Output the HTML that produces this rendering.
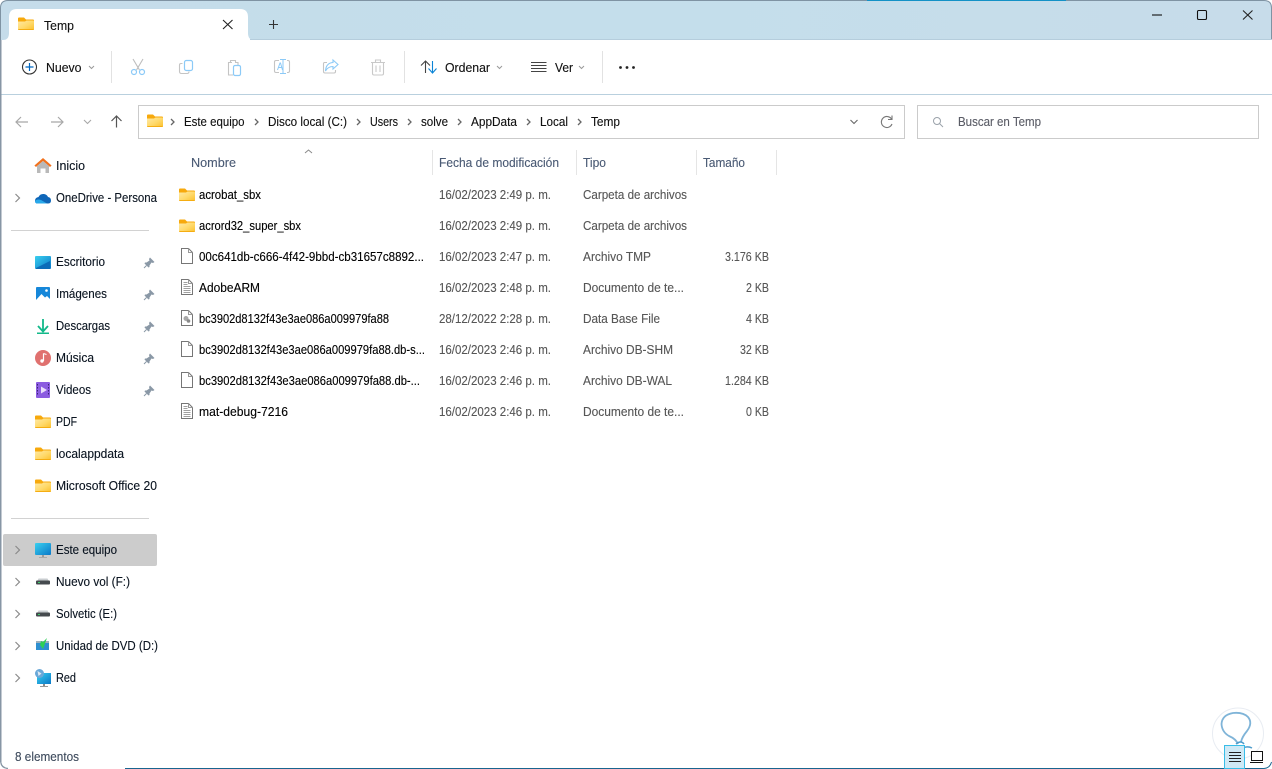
<!DOCTYPE html>
<html lang="es"><head><meta charset="utf-8"><title>Temp</title>
<style>
html,body{margin:0;padding:0;width:1272px;height:769px;overflow:hidden;background:#fff}
svg{display:block}
text{font-family:"Liberation Sans",sans-serif;font-size:12.5px;fill:#111;stroke:#111;stroke-width:.12px;white-space:pre}
.n{fill:#000;stroke:#000}
.h{fill:#4a5a74;stroke:#4a5a74}
.d{fill:#565656;stroke:#565656}
.s{fill:#0a1420;stroke:#0a1420}
.e{fill:#3d4a5c;stroke:#3d4a5c}
.q{fill:#5a5c66;stroke:#5a5c66}
</style></head><body>
<svg width="1272" height="769" viewBox="0 0 1272 769" xmlns="http://www.w3.org/2000/svg">
<defs>
<linearGradient id="fg" x1="0" y1="0" x2="1" y2="1"><stop offset="0" stop-color="#ffe9a6"/><stop offset=".55" stop-color="#ffd969"/><stop offset="1" stop-color="#fbc02d"/></linearGradient>
<linearGradient id="tb" x1="0" y1="0" x2="1" y2="0"><stop offset="0" stop-color="#c5dcea"/><stop offset=".5" stop-color="#c4deeb"/><stop offset="1" stop-color="#c7dcea"/></linearGradient>
<linearGradient id="mon" x1="0" y1="0" x2="1" y2="1"><stop offset="0" stop-color="#3ad0ef"/><stop offset="1" stop-color="#0a78c8"/></linearGradient>
<g id="folder"><path d="M0 1.500Q0 .5 1 .5H6L8 2.500H15Q16 2.500 16 3.500V5H0Z" fill="#f7a90c"/><path d="M0 4.500L7 4.500L8.500 3.500H15Q16 3.500 16 4.500V12Q16 13 15 13H1Q0 13 0 12Z" fill="url(#fg)"/><path d="M0 12H16V12Q16 13 15 13H1Q0 13 0 12Z" fill="#f5ad12"/></g>
<g id="doc"><path d="M1.500 .5H8.500L12.500 4.500V15.500H1.500Z" fill="#fff" stroke="#767676"/><path d="M8.500 .5V4.500H12.500" fill="none" stroke="#999"/></g>
<g id="txt"><use href="#doc"/><path d="M3.500 3.500H7.500M3.500 5.500H7.500M3.500 7.500H10.500M3.500 9.500H10.500M3.500 11.500H10.500M3.500 13.500H10.500" stroke="#a0a0a0" fill="none"/></g>
<g id="chev"><path d="M0 0L4 4L0 8" fill="none" stroke="#8a8a8a" stroke-width="1.200"/></g>
<g id="bc"><path d="M0 0L3 3L0 6" fill="none" stroke="#666" stroke-width="1.300"/></g>
<g id="pin"><path d="M6 .5L10.500 5L9 6L7.500 5.500L5.500 8.500L5.500 10L4.500 10.500L.5 6.500L1 5.500L2.500 5.500L5.500 3.500L5 2Z" fill="#8a98a6"/><path d="M2.500 8.500L0 11" stroke="#8a98a6" fill="none"/></g>
<g id="dr"><rect x="0" y="2.500" width="14" height="4" rx="1" fill="#454a4e"/><path d="M1.500 2.500L2.500 .5H11.500L12.500 2.500Z" fill="#c9cdd0"/><rect x="2" y="4" width="2" height="1" fill="#3fd06a"/></g>
</defs>

<!-- window -->
<rect x="0" y="0" width="1272" height="769" fill="#fff"/>
<path d="M0 40V8Q0 0 8 0H1264Q1272 0 1272 8V40Z" fill="url(#tb)"/>
<path d="M.5 40V8Q.5 .5 8 .5H1264Q1271.500 .5 1271.500 8V40" fill="none" stroke="#7f93a3"/>
<rect x="0" y="40" width="1.500" height="722" fill="#8796a5"/>
<path d="M.7 762Q1.500 768 8 768.500" fill="none" stroke="#8796a5" stroke-width="1.300"/>
<rect x="867" y="0" width="199" height="1" fill="#1391c6"/>
<path d="M125 768.500H1264Q1270 768 1271.500 762" fill="none" stroke="#19658f"/>

<!-- tab -->
<path d="M3 40Q9 40 9 33V17Q9 9 17 9H240Q248 9 248 17V33Q248 40 254 40Z" fill="#fff"/>
<rect x="1.500" y="40" width="1270.500" height="54" fill="#fff"/>
<path d="M250 39.500H1272" stroke="#b5cddc"/>
<use href="#folder" x="18" y="17"/>
<text x="44" y="30" textLength="30" lengthAdjust="spacingAndGlyphs">Temp</text>
<path d="M223 20L232.500 29M232.500 20L223 29" stroke="#222" stroke-width="1.100" fill="none"/>
<path d="M273.500 20V29M269 24.500H278" stroke="#333" stroke-width="1.100" fill="none"/>
<path d="M1152 15H1162" stroke="#111" fill="none" stroke-width="1.100"/>
<rect x="1197.500" y="10.500" width="9" height="9" rx="1.200" fill="none" stroke="#111" stroke-width="1.100"/>
<path d="M1243 10.500L1252.500 19.500M1252.500 10.500L1243 19.500" stroke="#222" stroke-width="1.100" fill="none"/>

<!-- toolbar -->
<circle cx="29.500" cy="67" r="7" fill="none" stroke="#333" stroke-width="1.100"/>
<path d="M29.500 63V71M25.500 67H33.500" stroke="#0067c0" stroke-width="1.200" fill="none"/>
<text x="46" y="72" textLength="35.500" lengthAdjust="spacingAndGlyphs">Nuevo</text>
<path d="M89 66L91.500 68.500L94 66" fill="none" stroke="#9a9a9a"/>
<rect x="111" y="51" width="1" height="32" fill="#e2e2e2"/>
<rect x="404" y="51" width="1" height="32" fill="#e2e2e2"/>
<rect x="602" y="51" width="1" height="32" fill="#e2e2e2"/>
<!-- cut -->
<path d="M133 59L139.500 70M143 59L136.500 70" stroke="#bdbdbd" stroke-width="1.100" fill="none"/>
<circle cx="134" cy="72" r="2.500" fill="none" stroke="#8ccaf7" stroke-width="1.200"/>
<circle cx="142" cy="72" r="2.500" fill="none" stroke="#8ccaf7" stroke-width="1.200"/>
<!-- copy -->
<path d="M182.500 63.500H181Q179.500 63.500 179.500 65V71.500Q179.500 73.500 181.500 73.500H187Q189 73.500 189 71.500" fill="none" stroke="#c4c4c4" stroke-width="1.100"/>
<rect x="184.500" y="60.500" width="8" height="10" rx="1.800" fill="#fff" stroke="#8ccaf7" stroke-width="1.200"/>
<!-- paste -->
<path d="M232 62.500H228.500V75H233M238 65V62.500H235M230.500 62V60.500H235.500V62.500" fill="none" stroke="#c4c4c4" stroke-width="1.100"/>
<rect x="233.500" y="65.500" width="7" height="10" rx="1.500" fill="#fff" stroke="#8ccaf7" stroke-width="1.200"/>
<!-- rename -->
<path d="M279 60.500H276Q274.500 60.500 274.500 62V71Q274.500 72.500 276 72.500H279M287 60.500H288Q289.500 60.500 289.500 62V71Q289.500 72.500 288 72.500H287" fill="none" stroke="#c4c4c4" stroke-width="1.100"/>
<path d="M280 59.500H286M280 73.500H286M283 59.500V73.500" fill="none" stroke="#8ccaf7" stroke-width="1"/>
<path d="M277.500 70L280 63H280.500L282.500 70M278.500 67.500H281.500" fill="none" stroke="#8ccaf7" stroke-width="1"/>
<!-- share -->
<path d="M327 62.500H324.500Q323.500 62.500 323.500 64V71.500Q323.500 73 325 73H334Q335.500 73 335.500 71.500V70" fill="none" stroke="#c4c4c4" stroke-width="1.100"/>
<path d="M333 60L338 64.500L333 69V66.500Q328 66.500 325.500 71Q326 63 333 62.500Z" fill="#fff" stroke="#8ccaf7" stroke-width="1.100"/>
<!-- delete -->
<path d="M371 62.500H385M375.500 62V60H380.500V62M372.500 63V73.500Q372.500 75 374 75H382Q383.500 75 383.500 73.500V63M376 65.500V72M380 65.500V72" fill="none" stroke="#c9c9c9" stroke-width="1.100"/>
<!-- sort -->
<path d="M425.500 73V61M421 65.500L425.500 61L430 65.500" fill="none" stroke="#444" stroke-width="1.100"/>
<path d="M432.500 61V73M428.500 68.500L432.500 73L436.500 68.500" fill="none" stroke="#0a84d6" stroke-width="1.100"/>
<text x="445" y="72" textLength="45" lengthAdjust="spacingAndGlyphs">Ordenar</text>
<path d="M497 66L499.500 68.500L502 66" fill="none" stroke="#9a9a9a"/>
<path d="M531 62.500H546.500M531 65.500H546.500M531 68.500H546.500M531 71.500H546.500" stroke="#444" fill="none"/>
<text x="555" y="72" textLength="18" lengthAdjust="spacingAndGlyphs">Ver</text>
<path d="M579 66L581.500 68.500L584 66" fill="none" stroke="#9a9a9a"/>
<circle cx="620.500" cy="67.500" r="1.400" fill="#222"/><circle cx="627" cy="67.500" r="1.400" fill="#222"/><circle cx="633.500" cy="67.500" r="1.400" fill="#222"/>
<rect x="1.500" y="94" width="1270.500" height="1" fill="#b9d0de"/>

<!-- nav -->
<path d="M28 122H16.500M21 117L16 122L21 127" fill="none" stroke="#a8a8a8" stroke-width="1.200"/>
<path d="M51 122H62.500M58 117L63 122L58 127" fill="none" stroke="#a8a8a8" stroke-width="1.200"/>
<path d="M84 120L87.500 123.500L91 120" fill="none" stroke="#a8a8a8" stroke-width="1.100"/>
<path d="M116.500 127.500V116M111.500 121L116.500 116L121.500 121" fill="none" stroke="#555" stroke-width="1.200"/>

<!-- address -->
<rect x="138.500" y="105.500" width="766" height="33" fill="#fff" stroke="#cbcbcb"/>
<use href="#folder" x="147" y="114"/>
<use href="#bc" x="171" y="119"/>
<text x="184" y="126" textLength="60.500" lengthAdjust="spacingAndGlyphs">Este equipo</text>
<use href="#bc" x="255" y="119"/>
<text x="268" y="126" textLength="79" lengthAdjust="spacingAndGlyphs">Disco local (C:)</text>
<use href="#bc" x="357" y="119"/>
<text x="370" y="126" textLength="28" lengthAdjust="spacingAndGlyphs">Users</text>
<use href="#bc" x="408" y="119"/>
<text x="421" y="126" textLength="27" lengthAdjust="spacingAndGlyphs">solve</text>
<use href="#bc" x="458" y="119"/>
<text x="471" y="126" textLength="46" lengthAdjust="spacingAndGlyphs">AppData</text>
<use href="#bc" x="527" y="119"/>
<text x="540" y="126" textLength="28" lengthAdjust="spacingAndGlyphs">Local</text>
<use href="#bc" x="578" y="119"/>
<text x="591" y="126" textLength="29" lengthAdjust="spacingAndGlyphs">Temp</text>
<path d="M850.500 120L854 123.500L857.500 120" fill="none" stroke="#666" stroke-width="1.100"/>
<path d="M891.500 119A5.500 5.500 0 1 0 892 124M892 115.500V119.500H888" fill="none" stroke="#777" stroke-width="1.100"/>
<rect x="917.500" y="105.500" width="341" height="33" fill="#fff" stroke="#cbcbcb"/>
<circle cx="937" cy="121" r="3.500" fill="none" stroke="#9aa2aa" stroke-width="1"/><path d="M939.500 123.500L943 127" stroke="#9aa2aa" fill="none"/>
<text class="q" x="958" y="126" textLength="83" lengthAdjust="spacingAndGlyphs">Buscar en Temp</text>

<!-- sidebar -->
<rect x="3" y="534" width="154" height="32" rx="2" fill="#cccccc"/>
<path d="M43 158.500L35 165.500L36 166.500L43 160.500L50 166.500L51 165.500Z" fill="#f2711c" stroke="#f2711c" stroke-width=".8"/>
<path d="M37 166L43 161L49 166V173H45.500V168.500H40.500V173H37Z" fill="#b9b9b9"/>
<text class="s" x="56" y="170" textLength="29" lengthAdjust="spacingAndGlyphs">Inicio</text>
<use href="#chev" x="15.500" y="194"/>
<path d="M35 201Q35 197.500 38.500 197Q40 193.500 44 194Q47 194.500 48 197Q51 197.500 51 200.500Q51 203.500 48 203.500H37.500Q35 203.500 35 201Z" fill="#0f66b8"/>
<path d="M35 201Q37 198.500 41 200L47 203.500H37.500Q35 203.500 35 201Z" fill="#28a8ea"/>
<text class="s" x="56" y="202" textLength="101" lengthAdjust="spacingAndGlyphs">OneDrive - Persona</text>
<rect x="11" y="230" width="138" height="1" fill="#d2d2d2"/>

<rect x="35" y="256" width="16" height="13" rx="1" fill="url(#mon)"/><path d="M36 268L50 261V269H36Z" fill="#0c6cb8"/>
<text class="s" x="56" y="266" textLength="49" lengthAdjust="spacingAndGlyphs">Escritorio</text>
<use href="#pin" x="144" y="257"/>

<rect x="36" y="287" width="14" height="14" rx="1" fill="#1687d9"/><path d="M36 300L41.500 294L45 297.500L47 296L50 299V301H36Z" fill="#fff"/><circle cx="46.500" cy="290.500" r="1.300" fill="#fff"/>
<text class="s" x="56" y="298" textLength="51" lengthAdjust="spacingAndGlyphs">Imágenes</text>
<use href="#pin" x="144" y="289"/>

<path d="M43 319V331M38 326L43 331.500L48 326" fill="none" stroke="#13b98a" stroke-width="1.800"/><rect x="37" y="332.500" width="12" height="1.500" fill="#13b98a"/>
<text class="s" x="56" y="330" textLength="54" lengthAdjust="spacingAndGlyphs">Descargas</text>
<use href="#pin" x="144" y="321"/>

<circle cx="43" cy="358" r="8" fill="#e0716f"/><path d="M43.500 353.500V361" stroke="#fff" stroke-width="1.200" fill="none"/><path d="M43.500 353.500L46.500 354.500" stroke="#fff" fill="none"/><circle cx="42" cy="361" r="1.700" fill="#fff"/>
<text class="s" x="56" y="362" textLength="38" lengthAdjust="spacingAndGlyphs">Música</text>
<use href="#pin" x="144" y="353"/>

<rect x="36" y="382" width="14" height="16" rx="1" fill="#8b5ce0"/><path d="M41 386.500L47 390L41 393.500Z" fill="#e9defa"/><path d="M37.500 384V396M48.500 384V396" stroke="#3b2375" stroke-dasharray="1.500 1.500" fill="none"/>
<text class="s" x="56" y="394" textLength="35" lengthAdjust="spacingAndGlyphs">Videos</text>
<use href="#pin" x="144" y="385"/>

<use href="#folder" x="35" y="415"/>
<text class="s" x="56" y="426" textLength="21" lengthAdjust="spacingAndGlyphs">PDF</text>
<use href="#folder" x="35" y="447"/>
<text class="s" x="56" y="458" textLength="68" lengthAdjust="spacingAndGlyphs">localappdata</text>
<use href="#folder" x="35" y="479"/>
<text class="s" x="56" y="490" textLength="101" lengthAdjust="spacingAndGlyphs">Microsoft Office 20</text>
<rect x="11" y="518" width="138" height="1" fill="#d2d2d2"/>

<use href="#chev" x="15.500" y="546"/>
<rect x="35" y="543" width="16" height="12" rx="1" fill="url(#mon)"/><rect x="42" y="555" width="2" height="2" fill="#9a9a9a"/><rect x="39" y="557" width="8" height="1" fill="#aaa"/>
<text class="s" x="56" y="554" textLength="61" lengthAdjust="spacingAndGlyphs">Este equipo</text>
<use href="#chev" x="15.500" y="578"/>
<use href="#dr" x="36" y="578"/>
<text class="s" x="56" y="586" textLength="74" lengthAdjust="spacingAndGlyphs">Nuevo vol (F:)</text>
<use href="#chev" x="15.500" y="610"/>
<use href="#dr" x="36" y="610"/>
<text class="s" x="56" y="618" textLength="61" lengthAdjust="spacingAndGlyphs">Solvetic (E:)</text>
<use href="#chev" x="15.500" y="642"/>
<rect x="36" y="642" width="13" height="8" fill="#2e8fd0"/><rect x="36" y="641" width="13" height="2" fill="#9fb0bc"/><path d="M40 645L43 649L47 638L43 642L41 641Z" fill="#2ecf55"/>
<text class="s" x="56" y="650" textLength="102" lengthAdjust="spacingAndGlyphs">Unidad de DVD (D:)</text>
<use href="#chev" x="15.500" y="674"/>
<rect x="37" y="673" width="14" height="11" fill="url(#mon)"/><rect x="43" y="684" width="2" height="2" fill="#8a8a8a"/><rect x="40" y="686" width="8" height="1" fill="#9a9a9a"/><circle cx="39.500" cy="673.500" r="4.500" fill="#6aa8d8"/><path d="M37.500 671L41.500 673.500L38.500 676Z" fill="#dfeaf3"/>
<text class="s" x="56" y="682" textLength="20" lengthAdjust="spacingAndGlyphs">Red</text>
<text class="e" x="15" y="761" textLength="64" lengthAdjust="spacingAndGlyphs">8 elementos</text>

<!-- headers -->
<path d="M305 153L308.500 150L312 153" fill="none" stroke="#8a8a8a"/>
<text class="h" x="191" y="167" textLength="45" lengthAdjust="spacingAndGlyphs">Nombre</text>
<rect x="432" y="150" width="1" height="25" fill="#e5e5e5"/>
<text class="h" x="439" y="167" textLength="120" lengthAdjust="spacingAndGlyphs">Fecha de modificación</text>
<rect x="576" y="150" width="1" height="25" fill="#e5e5e5"/>
<text class="h" x="583" y="167" textLength="23" lengthAdjust="spacingAndGlyphs">Tipo</text>
<rect x="696" y="150" width="1" height="25" fill="#e5e5e5"/>
<text class="h" x="703" y="167" textLength="42" lengthAdjust="spacingAndGlyphs">Tamaño</text>
<rect x="776" y="150" width="1" height="25" fill="#e5e5e5"/>

<!-- rows -->
<use href="#folder" x="179" y="188"/>
<text class="n" x="199" y="199" textLength="62" lengthAdjust="spacingAndGlyphs">acrobat_sbx</text>
<text class="d" x="439" y="199" textLength="112" lengthAdjust="spacingAndGlyphs">16/02/2023 2:49 p. m.</text>
<text class="d" x="583" y="199" textLength="104" lengthAdjust="spacingAndGlyphs">Carpeta de archivos</text>

<use href="#folder" x="179" y="219"/>
<text class="n" x="199" y="230" textLength="102" lengthAdjust="spacingAndGlyphs">acrord32_super_sbx</text>
<text class="d" x="439" y="230" textLength="112" lengthAdjust="spacingAndGlyphs">16/02/2023 2:49 p. m.</text>
<text class="d" x="583" y="230" textLength="104" lengthAdjust="spacingAndGlyphs">Carpeta de archivos</text>

<use href="#doc" x="180" y="248"/>
<text class="n" x="199" y="261" textLength="225" lengthAdjust="spacingAndGlyphs">00c641db-c666-4f42-9bbd-cb31657c8892...</text>
<text class="d" x="439" y="261" textLength="112" lengthAdjust="spacingAndGlyphs">16/02/2023 2:47 p. m.</text>
<text class="d" x="583" y="261" textLength="68" lengthAdjust="spacingAndGlyphs">Archivo TMP</text>
<text class="d" x="725" y="261" textLength="44" lengthAdjust="spacingAndGlyphs">3.176 KB</text>

<use href="#txt" x="180" y="279"/>
<text class="n" x="199" y="292" textLength="61" lengthAdjust="spacingAndGlyphs">AdobeARM</text>
<text class="d" x="439" y="292" textLength="112" lengthAdjust="spacingAndGlyphs">16/02/2023 2:48 p. m.</text>
<text class="d" x="583" y="292" textLength="101" lengthAdjust="spacingAndGlyphs">Documento de te...</text>
<text class="d" x="746" y="292" textLength="23" lengthAdjust="spacingAndGlyphs">2 KB</text>

<use href="#doc" x="180" y="310"/><circle cx="186" cy="318.500" r="2.500" fill="#a8a8a8"/><circle cx="188.500" cy="321" r="1.800" fill="#8a8a8a"/>
<text class="n" x="199" y="323" textLength="190" lengthAdjust="spacingAndGlyphs">bc3902d8132f43e3ae086a009979fa88</text>
<text class="d" x="439" y="323" textLength="112" lengthAdjust="spacingAndGlyphs">28/12/2022 2:28 p. m.</text>
<text class="d" x="583" y="323" textLength="77" lengthAdjust="spacingAndGlyphs">Data Base File</text>
<text class="d" x="746" y="323" textLength="23" lengthAdjust="spacingAndGlyphs">4 KB</text>

<use href="#doc" x="180" y="341"/>
<text class="n" x="199" y="354" textLength="226" lengthAdjust="spacingAndGlyphs">bc3902d8132f43e3ae086a009979fa88.db-s...</text>
<text class="d" x="439" y="354" textLength="112" lengthAdjust="spacingAndGlyphs">16/02/2023 2:46 p. m.</text>
<text class="d" x="583" y="354" textLength="90" lengthAdjust="spacingAndGlyphs">Archivo DB-SHM</text>
<text class="d" x="740" y="354" textLength="29" lengthAdjust="spacingAndGlyphs">32 KB</text>

<use href="#doc" x="180" y="372"/>
<text class="n" x="199" y="385" textLength="221" lengthAdjust="spacingAndGlyphs">bc3902d8132f43e3ae086a009979fa88.db-...</text>
<text class="d" x="439" y="385" textLength="112" lengthAdjust="spacingAndGlyphs">16/02/2023 2:46 p. m.</text>
<text class="d" x="583" y="385" textLength="89" lengthAdjust="spacingAndGlyphs">Archivo DB-WAL</text>
<text class="d" x="725" y="385" textLength="44" lengthAdjust="spacingAndGlyphs">1.284 KB</text>

<use href="#txt" x="180" y="403"/>
<text class="n" x="199" y="416" textLength="89" lengthAdjust="spacingAndGlyphs">mat-debug-7216</text>
<text class="d" x="439" y="416" textLength="112" lengthAdjust="spacingAndGlyphs">16/02/2023 2:46 p. m.</text>
<text class="d" x="583" y="416" textLength="101" lengthAdjust="spacingAndGlyphs">Documento de te...</text>
<text class="d" x="746" y="416" textLength="23" lengthAdjust="spacingAndGlyphs">0 KB</text>

<!-- watermark -->
<circle cx="1238" cy="733.500" r="25.500" fill="none" stroke="#e8ecf2"/>
<path d="M1241 742Q1242 737 1247 731Q1253 723 1248 717Q1243 712 1233 713Q1222 715 1221.500 724Q1222 732 1229 736Q1236 739 1238 744" fill="none" stroke="#7fb4d8" stroke-width="1.800"/>
<path d="M1236 744Q1241 740 1244 744M1240 750Q1246 745 1252 748" fill="none" stroke="#4d9ccb" stroke-width="1.500"/>

<!-- view toggle -->
<rect x="1224.500" y="745.500" width="20" height="23" fill="#cfe9f5" stroke="#38bde8"/>
<path d="M1229 752.500H1241M1229 755.500H1241M1229 758.500H1241M1229 761.500H1241" stroke="#222" fill="none"/>
<rect x="1251.500" y="751.500" width="11" height="9" fill="#fff" stroke="#111"/><path d="M1250 762.500H1263" stroke="#111" fill="none"/>
</svg>
</body></html>
